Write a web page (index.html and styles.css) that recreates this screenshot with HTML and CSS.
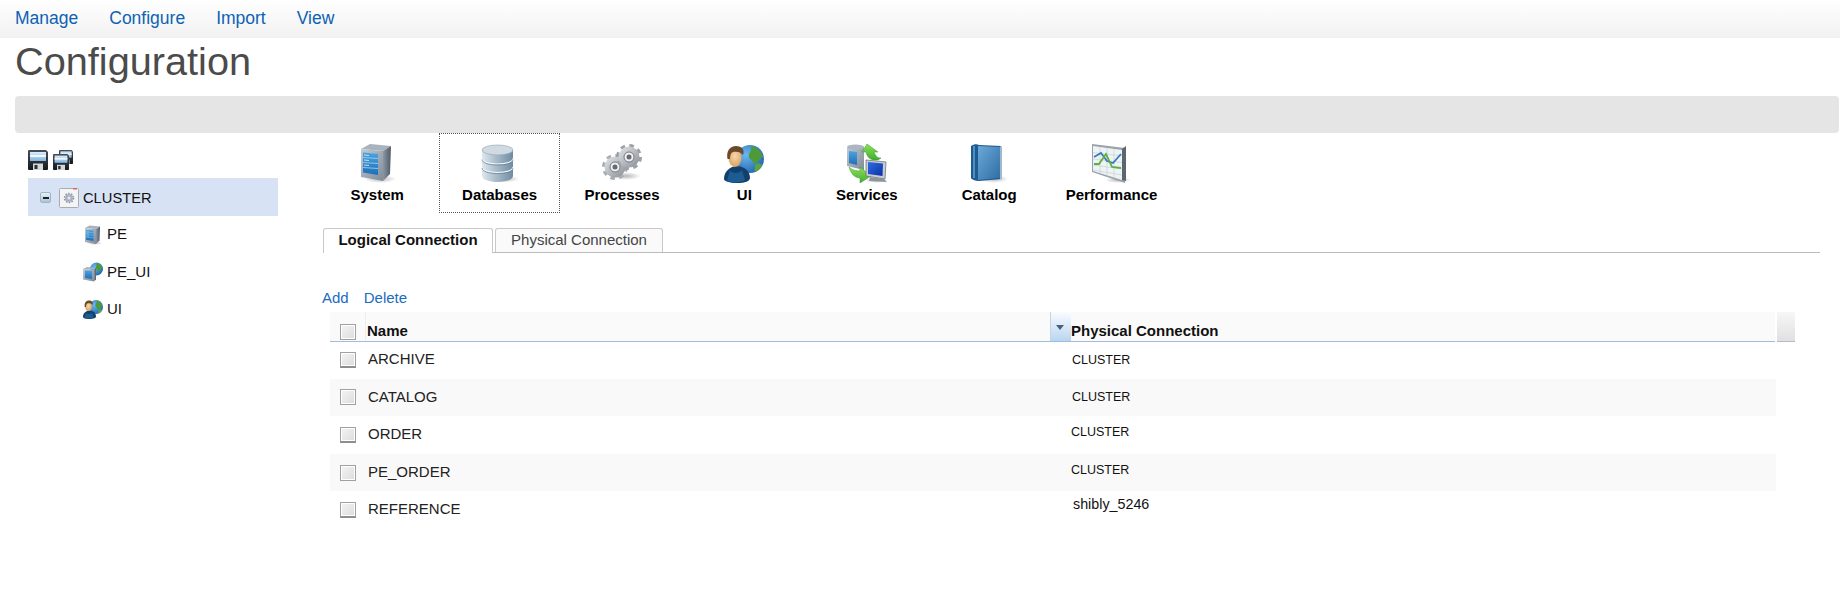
FILE: index.html
```html
<!DOCTYPE html>
<html lang="en">
<head>
<meta charset="utf-8">
<title>Configuration</title>
<link rel="stylesheet" href="styles.css">
</head>
<body>
<svg class="sprite" xmlns="http://www.w3.org/2000/svg" aria-hidden="true">
  <defs>
    <linearGradient id="gBlue" x1="0" y1="0" x2="0" y2="1"><stop offset="0" stop-color="#4aa3e0"/><stop offset="1" stop-color="#1f6fb5"/></linearGradient>
    <linearGradient id="gFront" x1="0" y1="0" x2="1" y2="1"><stop offset="0" stop-color="#c3ccd6"/><stop offset="1" stop-color="#7f8b98"/></linearGradient>
    <linearGradient id="gSide" x1="0" y1="0" x2="1" y2="0"><stop offset="0" stop-color="#8b97a5"/><stop offset="1" stop-color="#4f5a66"/></linearGradient>
    <linearGradient id="gDb" x1="0" y1="0" x2="1" y2="0"><stop offset="0" stop-color="#dfe7ed"/><stop offset=".45" stop-color="#a9bccb"/><stop offset="1" stop-color="#6f8ba1"/></linearGradient>
    <linearGradient id="gGear" x1="0" y1="0" x2="1" y2="1"><stop offset="0" stop-color="#e4e6e9"/><stop offset="1" stop-color="#8a8f96"/></linearGradient>
    <linearGradient id="gBook" x1="0" y1="0" x2="1" y2="1"><stop offset="0" stop-color="#6aa9d8"/><stop offset="1" stop-color="#2f6da3"/></linearGradient>
    <linearGradient id="gGreen" x1="0" y1="0" x2="0" y2="1"><stop offset="0" stop-color="#8fe05a"/><stop offset="1" stop-color="#3fae2e"/></linearGradient>
    <linearGradient id="gScreen" x1="0" y1="0" x2="1" y2="1"><stop offset="0" stop-color="#2f6fe0"/><stop offset="1" stop-color="#0c2fa8"/></linearGradient>
    <radialGradient id="gGlobe" cx=".35" cy=".35" r=".8"><stop offset="0" stop-color="#6bb8ef"/><stop offset="1" stop-color="#1b5ea6"/></radialGradient>
    <radialGradient id="gFace" cx=".5" cy=".4" r=".7"><stop offset="0" stop-color="#f8d8a8"/><stop offset="1" stop-color="#d29a5a"/></radialGradient>
    <radialGradient id="gShadow"><stop offset="0" stop-color="#888" stop-opacity=".6"/><stop offset="1" stop-color="#888" stop-opacity="0"/></radialGradient>
    <linearGradient id="gFloppy" x1="0" y1="0" x2="0" y2="1"><stop offset="0" stop-color="#4a4f55"/><stop offset="1" stop-color="#15181b"/></linearGradient>
    <linearGradient id="gLabel" x1="0" y1="0" x2="0" y2="1"><stop offset="0" stop-color="#d9ecfa"/><stop offset="1" stop-color="#7db5e2"/></linearGradient>
  </defs>
  <symbol id="i-server" viewBox="0 0 40 40">
    <ellipse cx="23" cy="36" rx="16" ry="4" fill="url(#gShadow)"/>
    <polygon points="4,6 13,1 34,3 26,8" fill="#a9b3bd"/>
    <polygon points="26,8 34,3 33,31 26,38" fill="url(#gSide)"/>
    <polygon points="4,6 26,8 26,38 4,34" fill="url(#gFront)"/>
    <polygon points="6,9.5 21,11 21,32 6,29.500" fill="url(#gBlue)"/>
    <path d="M6 14.500 21 15.500M6 19.500 21 20.500M6 24.500 21 25.500" stroke="#a7d6f5" stroke-width=".8" fill="none"/>
    <path d="M7 12 12 12.500M7 17 12 17.500M7 22 12 22.500" stroke="#bfe2f8" stroke-width="1" fill="none"/>
  </symbol>
  <symbol id="i-db" viewBox="0 0 40 40">
    <ellipse cx="25" cy="36" rx="14" ry="3.500" fill="url(#gShadow)"/>
    <path d="M2 7v26c0 3.500 7 6 15.500 6S33 36.500 33 33V7z" fill="url(#gDb)"/>
    <ellipse cx="17.500" cy="7" rx="15.500" ry="5" fill="#cfdae3" stroke="#8fa4b5" stroke-width=".6"/>
    <path d="M2 15.500c0 3.500 7 5.500 15.500 5.500S33 19 33 15.500M2 24c0 3.500 7 5.500 15.500 5.500S33 27.500 33 24" stroke="#f4f8fa" stroke-width="1.200" fill="none"/>
    <path d="M2 16.500c0 3.500 7 5.500 15.500 5.500S33 20 33 16.500M2 25c0 3.500 7 5.500 15.500 5.500S33 28.500 33 25" stroke="#5f7a90" stroke-width=".7" fill="none"/>
  </symbol>
  <symbol id="i-gears" viewBox="0 0 40 40">
    <ellipse cx="24" cy="33" rx="15" ry="4" fill="url(#gShadow)"/>
    <g>
      <circle cx="13" cy="24" r="11" fill="none" stroke="#a8adb3" stroke-width="4" stroke-dasharray="4.400 4.240"/>
      <circle cx="13" cy="24" r="10.500" fill="url(#gGear)"/>
      <circle cx="13" cy="24" r="5" fill="#f0f1f2" stroke="#777c83" stroke-width="1"/>
      <circle cx="13" cy="24" r="2.500" fill="#666b72"/>
    </g>
    <g>
      <circle cx="27" cy="14" r="11" fill="none" stroke="#9ba1a8" stroke-width="4" stroke-dasharray="4.400 4.240"/>
      <circle cx="27" cy="14" r="10.500" fill="url(#gGear)"/>
      <circle cx="27" cy="14" r="5" fill="#f0f1f2" stroke="#777c83" stroke-width="1"/>
      <circle cx="27" cy="14" r="2.500" fill="#666b72"/>
    </g>
  </symbol>
  <symbol id="i-ui" viewBox="0 0 40 40">
    <circle cx="26" cy="16" r="14" fill="url(#gGlobe)"/>
    <path d="M27 3c5 1 10 5 12 10-1 3-4 2-5 5s-4 4-5 1-5-3-4-7 3-3 2-9z" fill="#4f9a38"/>
    <path d="M32 21c3-1 5 0 6 1-1 3-4 6-7 7-1-3 0-6 1-8z" fill="#5aa63e"/>
    <path d="M0 36c0-8 6-12 12-13 7 0 14 4 14 12 0 3-5 5-13 5S0 38 0 36z" fill="#123f6b"/>
    <path d="M6 27c2 4 9 4 12 0l3 10c-5 3-13 3-18 1z" fill="#1d5c92"/>
    <ellipse cx="11" cy="15" rx="6.500" ry="9" fill="url(#gFace)"/>
    <path d="M3.500 16C2 8 6 3 12 3s9 4 7 9c-2-3-6-4-10-3-2 .5-3 3-3 7z" fill="#6b4a2b"/>
  </symbol>
  <symbol id="i-serv" viewBox="0 0 40 40">
    <ellipse cx="29" cy="37" rx="11" ry="3" fill="url(#gShadow)"/>
    <polygon points="0,5 8,2 17,4 17,27 0,23" fill="url(#gFront)"/>
    <polygon points="2,8 10,9 10,22 2,20" fill="url(#gBlue)"/>
    <ellipse cx="8.500" cy="4" rx="8.500" ry="2.500" fill="#aab6c2"/>
    <path d="M20 1 15 9h4c1 4 2 6 7 8l5 0 3-2c-3 0-5-1-7-6h4z" fill="url(#gGreen)" stroke="#3b9a2c" stroke-width=".5"/>
    <path d="M2 24c3 3 7 4 11 4v-4l11 9-11 7v-5c-5 0-9-4-11-11z" fill="url(#gGreen)" stroke="#3b9a2c" stroke-width=".5"/>
    <polygon points="19,17 39,19 38,36 19,33" fill="#c8cdd2" stroke="#6c7379" stroke-width=".8"/>
    <polygon points="21,19 36,20.500 35.500,33 21,31" fill="url(#gScreen)"/>
    <polygon points="23,34 37,36 40,39 22,38" fill="#8d949b"/>
  </symbol>
  <symbol id="i-book" viewBox="0 0 40 40">
    <ellipse cx="25" cy="36" rx="14" ry="4" fill="url(#gShadow)"/>
    <path d="M2 3C5 1 8 1 10 2l22 1 1 33-23 2c-3 0-7-1-8-3z" fill="#1e5a8f"/>
    <polygon points="9,3 31,4 31,35 9,37" fill="url(#gBook)"/>
    <path d="M31 3.500h2V36h-2z" fill="#9fb9cf"/>
    <path d="M5 3v32" stroke="#4f90c4" stroke-width="2" fill="none"/>
  </symbol>
  <symbol id="i-perf" viewBox="0 0 40 40">
    <ellipse cx="26" cy="37" rx="13" ry="3" fill="url(#gShadow)"/>
    <polygon points="0,1 33,5 33,40 0,29" fill="#9aa3ab"/>
    <polygon points="1,3 30,7 30,37 1,28" fill="#eef3f4"/>
    <path d="M8 4v26M15 5v27M22 6v29M1 9.500 30 13M1 16 30 19.500M1 22 30 26M1 27 30 32" stroke="#c6d2d8" stroke-width=".7" fill="none"/>
    <polyline points="2,14 9,10 15,18 21,20 29,11" stroke="#3a78c0" stroke-width="1.800" fill="none"/>
    <polyline points="2,21 7,21 14,11 20,24 29,25" stroke="#5fb043" stroke-width="1.800" fill="none"/>
    <polygon points="30,6 34,3 34,38 30,37" fill="#5d666e"/>
  </symbol>
  <symbol id="i-peui" viewBox="0 0 40 40">
    <circle cx="27" cy="14" r="13" fill="url(#gGlobe)"/>
    <path d="M27 2c5 1 10 4 12 9-1 3-4 2-5 5s-4 3-5 1-3-3-3-6 2-3 1-9z" fill="#4f9a38"/>
    <polygon points="0,14 8,10 26,12 22,15" fill="#a9b3bd"/>
    <polygon points="22,15 26,12 26,35 22,39" fill="url(#gSide)"/>
    <polygon points="0,14 22,15 22,39 0,35" fill="url(#gFront)"/>
    <polygon points="4,17 18,18 18,34 4,32" fill="url(#gBlue)"/>
  </symbol>
  <symbol id="i-save" viewBox="0 0 20 20">
    <path d="M1 0h17l2 2v17a1 1 0 0 1-1 1H1a1 1 0 0 1-1-1V1a1 1 0 0 1 1-1z" fill="url(#gFloppy)"/>
    <rect x="2" y="2" width="16" height="9" fill="url(#gLabel)"/>
    <rect x="2" y="5" width="16" height="2" fill="#f2f7fb"/>
    <rect x="5" y="13.500" width="10" height="6.500" fill="#d5d8db"/>
    <rect x="6.500" y="15" width="3" height="4" fill="#2a2d30"/>
  </symbol>
  <symbol id="i-cluster" viewBox="0 0 20 20">
    <rect x=".5" y=".5" width="19" height="19" rx="1" fill="#f3f4f5" stroke="#a8acb0"/>
    <rect x="14" y="0" width="4" height="1.500" fill="#d66"/>
    <circle cx="10" cy="10" r="4.500" fill="none" stroke="#8a95a3" stroke-width="1.600" stroke-dasharray="1.500 1.330"/>
    <circle cx="10" cy="10" r="4" fill="#a9b2bd"/>
    <circle cx="10" cy="10" r="1.500" fill="#e8eaec"/>
  </symbol>
</svg>

<nav class="menubar">
  <a class="menu-link" href="#">Manage</a>
  <a class="menu-link" href="#">Configure</a>
  <a class="menu-link" href="#">Import</a>
  <a class="menu-link" href="#">View</a>
</nav>
<h1 class="page-title">Configuration</h1>
<div class="status-bar"></div>

<div class="workspace">
  <aside class="sidebar">
    <div class="save-tools">
      <svg class="save-icon"><use href="#i-save"/></svg>
      <span class="save-all">
        <svg class="save-back"><use href="#i-save"/></svg>
        <svg class="save-front"><use href="#i-save"/></svg>
      </span>
    </div>
    <div class="tree-row tree-root">
      <span class="tree-toggle"><span class="tree-minus"></span></span>
      <svg class="tree-icon"><use href="#i-cluster"/></svg>
      <span class="tree-root-label">CLUSTER</span>
    </div>
    <div class="tree-row tree-child"><svg class="tree-icon"><use href="#i-server"/></svg><span>PE</span></div>
    <div class="tree-row tree-child"><svg class="tree-icon"><use href="#i-peui"/></svg><span>PE_UI</span></div>
    <div class="tree-row tree-child"><svg class="tree-icon"><use href="#i-ui"/></svg><span>UI</span></div>
  </aside>

  <main class="content">
    <div class="toolbar">
      <div class="tool"><svg class="tool-icon"><use href="#i-server"/></svg><span class="tool-label">System</span></div>
      <div class="tool tool-active"><svg class="tool-icon"><use href="#i-db"/></svg><span class="tool-label">Databases</span></div>
      <div class="tool"><svg class="tool-icon"><use href="#i-gears"/></svg><span class="tool-label">Processes</span></div>
      <div class="tool"><svg class="tool-icon"><use href="#i-ui"/></svg><span class="tool-label">UI</span></div>
      <div class="tool"><svg class="tool-icon"><use href="#i-serv"/></svg><span class="tool-label">Services</span></div>
      <div class="tool"><svg class="tool-icon"><use href="#i-book"/></svg><span class="tool-label">Catalog</span></div>
      <div class="tool"><svg class="tool-icon"><use href="#i-perf"/></svg><span class="tool-label">Performance</span></div>
    </div>

    <div class="tabs">
      <div class="tab tab-active">Logical Connection</div>
      <div class="tab">Physical Connection</div>
    </div>

    <div class="actions">
      <a class="action-link" href="#">Add</a>
      <a class="action-link" href="#">Delete</a>
    </div>

    <table class="grid">
      <colgroup>
        <col class="col-check"><col class="col-name"><col class="col-sort"><col class="col-phys"><col class="col-scroll">
      </colgroup>
      <thead>
        <tr>
          <th class="cell-check"><span class="check"></span></th>
          <th class="head-name">Name</th>
          <th class="head-sort"><span class="sort-arrow"></span></th>
          <th class="head-phys">Physical Connection</th>
          <th class="head-scroll"></th>
        </tr>
      </thead>
      <tbody>
        <tr><td class="cell-check"><span class="check check-row"></span></td><td class="cell-name cell-name-up">ARCHIVE</td><td></td><td class="cell-phys">CLUSTER</td><td class="cell-blank"></td></tr>
        <tr class="row-alt"><td class="cell-check"><span class="check"></span></td><td class="cell-name">CATALOG</td><td></td><td class="cell-phys">CLUSTER</td><td class="cell-blank"></td></tr>
        <tr><td class="cell-check"><span class="check check-row"></span></td><td class="cell-name">ORDER</td><td></td><td class="cell-phys cell-up">CLUSTER</td><td class="cell-blank"></td></tr>
        <tr class="row-alt"><td class="cell-check"><span class="check"></span></td><td class="cell-name">PE_ORDER</td><td></td><td class="cell-phys cell-up">CLUSTER</td><td class="cell-blank"></td></tr>
        <tr><td class="cell-check"><span class="check check-row"></span></td><td class="cell-name cell-name-up">REFERENCE</td><td></td><td class="cell-phys cell-user">shibly_5246</td><td class="cell-blank"></td></tr>
      </tbody>
    </table>
  </main>
</div>
</body>
</html>
```

FILE: styles.css
```css
* { box-sizing: border-box; }

html, body {
  margin: 0;
  padding: 0;
  background: #fff;
  font-family: "Liberation Sans", Arial, sans-serif;
  color: #222;
}

.sprite { display: block; width: 0; height: 0; }

.menubar {
  display: flex;
  height: 38px;
  padding: 8px 0 0 15px;
  gap: 31px;
  background: linear-gradient(#ffffff, #f1f1f1);
}

.menu-link {
  font-size: 17.500px;
  line-height: 20px;
  color: #0d62b3;
  text-decoration: none;
}

.page-title {
  margin: 0;
  height: 58px;
  padding-left: 15px;
  font-size: 39.700px;
  line-height: 47px;
  font-weight: normal;
  color: #4b4b4b;
}

.status-bar {
  height: 37px;
  margin: 0 1px 0 15px;
  background: #e5e5e5;
  border-radius: 4px;
}

.workspace { display: flex; }

.sidebar {
  width: 316px;
  flex: none;
  padding-left: 28px;
}

.save-tools {
  display: flex;
  gap: 5px;
  height: 45px;
  padding-top: 17px;
}

.save-icon { display: block; width: 20px; height: 20px; }

.save-all {
  display: grid;
  width: 20px;
  height: 20px;
  grid-template: repeat(20, 1px) / repeat(20, 1px);
}

.save-back { grid-area: 1 / 7 / 15 / 21; width: 14px; height: 14px; }
.save-front { grid-area: 5 / 1 / 21 / 17; width: 16px; height: 16px; }

.tree-row {
  display: flex;
  align-items: center;
  width: 250px;
  font-size: 15px;
  color: #111;
}

.tree-root {
  height: 38px;
  padding: 1px 0 0 12px;
  background: #d7e3f5;
}

.tree-root-label { font-size: 14.700px; padding-top: 1px; }

.tree-toggle {
  display: flex;
  align-items: center;
  justify-content: center;
  width: 11px;
  height: 11px;
  margin-right: 8px;
  background: linear-gradient(#e8f1f8, #a9c4da);
  border: 1px solid #9fb6c8;
  border-radius: 2px;
}

.tree-minus { width: 6px; height: 2px; background: #222; }

.tree-child {
  height: 37px;
  padding-left: 55px;
}

.tree-child span { margin-bottom: 2px; }

.tree-child + .tree-child span { margin-bottom: 0; }

.tree-icon { display: block; width: 20px; height: 20px; flex: none; margin-right: 4px; }

.content { flex: 1; min-width: 0; }

.toolbar {
  display: flex;
  height: 95px;
}

.tool {
  display: flex;
  flex-direction: column;
  align-items: center;
  width: 122.400px;
  height: 80px;
  padding-top: 9px;
  border: 1px dotted transparent;
}

.tool-active {
  width: 120.400px;
  margin: 0 1px;
  border-color: #555;
}

.tool-icon { display: block; width: 40px; height: 40px; flex: none; }

.tool-label {
  margin-top: 3px;
  font-size: 15px;
  line-height: 18px;
  font-weight: bold;
  color: #000;
}

.tabs {
  display: flex;
  gap: 2px;
  margin: 0 20px 0 7px;
  height: 25px;
  border-bottom: 1px solid #bcbcbc;
}

.tab {
  width: 168px;
  height: 24px;
  text-align: center;
  font-size: 15px;
  line-height: 22px;
  color: #444;
  background: #fafafa;
  border: 1px solid #c8c8c8;
  border-bottom: none;
  border-radius: 3px 3px 0 0;
}

.tab-active {
  width: 170px;
  height: 25px;
  font-weight: bold;
  color: #111;
  background: #fff;
}

.actions {
  display: flex;
  gap: 15px;
  height: 59px;
  padding: 36px 0 0 6px;
}

.action-link {
  font-size: 15px;
  line-height: 18px;
  color: #1a6cc0;
  text-decoration: none;
}

.grid {
  width: 1465px;
  margin-left: 14px;
  border-collapse: collapse;
  table-layout: fixed;
  font-size: 15px;
}

.col-check { width: 36px; }
.col-name { width: 685px; }
.col-sort { width: 20px; }
.col-phys { width: 705px; }
.col-scroll { width: 19px; }

.grid th {
  height: 29px;
  padding: 0 0 1px;
  text-align: left;
  vertical-align: bottom;
  font-size: 15px;
  line-height: 18px;
  color: #111;
  background: #fafafa;
  border-bottom: 1px solid #a3bcd9;
}

.grid td { height: 37.600px; padding: 0; vertical-align: middle; }

.grid .cell-check { padding-left: 10px; }

.grid thead .cell-check { box-shadow: inset -1px 0 0 #e7eef6; }

.check {
  display: block;
  width: 16px;
  height: 16px;
  background: linear-gradient(135deg, #f4f4f4, #dcdcdc);
  border: 1px solid #a0a0a0;
  box-shadow: inset 0 0 0 1px #fff;
}

.check-row { border-bottom: 2px solid #8e8e8e; }

.grid .head-name { padding-left: 1px; }

.grid .head-sort {
  padding: 0;
  background: linear-gradient(#fafcff, #b9d5f1);
  box-shadow: -1px 0 0 #c3d5e8;
  vertical-align: top;
}

.sort-arrow {
  display: block;
  width: 0;
  height: 0;
  margin: 13px 0 0 5px;
  border-style: solid;
  border-width: 5px 4px 0;
  border-color: #47627f transparent transparent;
}

.grid .head-phys { padding-left: 0; }

.grid .head-scroll {
  background: linear-gradient(#f7f7f7, #e0e0e0);
  border-bottom-color: #b2b9cc;
  border-left: 2px solid #fff;
}

.grid .cell-name { padding: 0 0 2px 2px; color: #222; }

.grid .cell-name-up { padding-bottom: 4px; }

.grid .cell-phys { font-size: 12.500px; color: #111; padding-left: 1px; }

.grid .cell-up { padding-left: 0; padding-bottom: 6px; }

.grid .cell-user { font-size: 14.300px; padding-left: 2px; padding-bottom: 13px; }

.row-alt td { background: #f9f9f9; }

.grid .cell-blank, .row-alt .cell-blank { background: #fff; }
```
